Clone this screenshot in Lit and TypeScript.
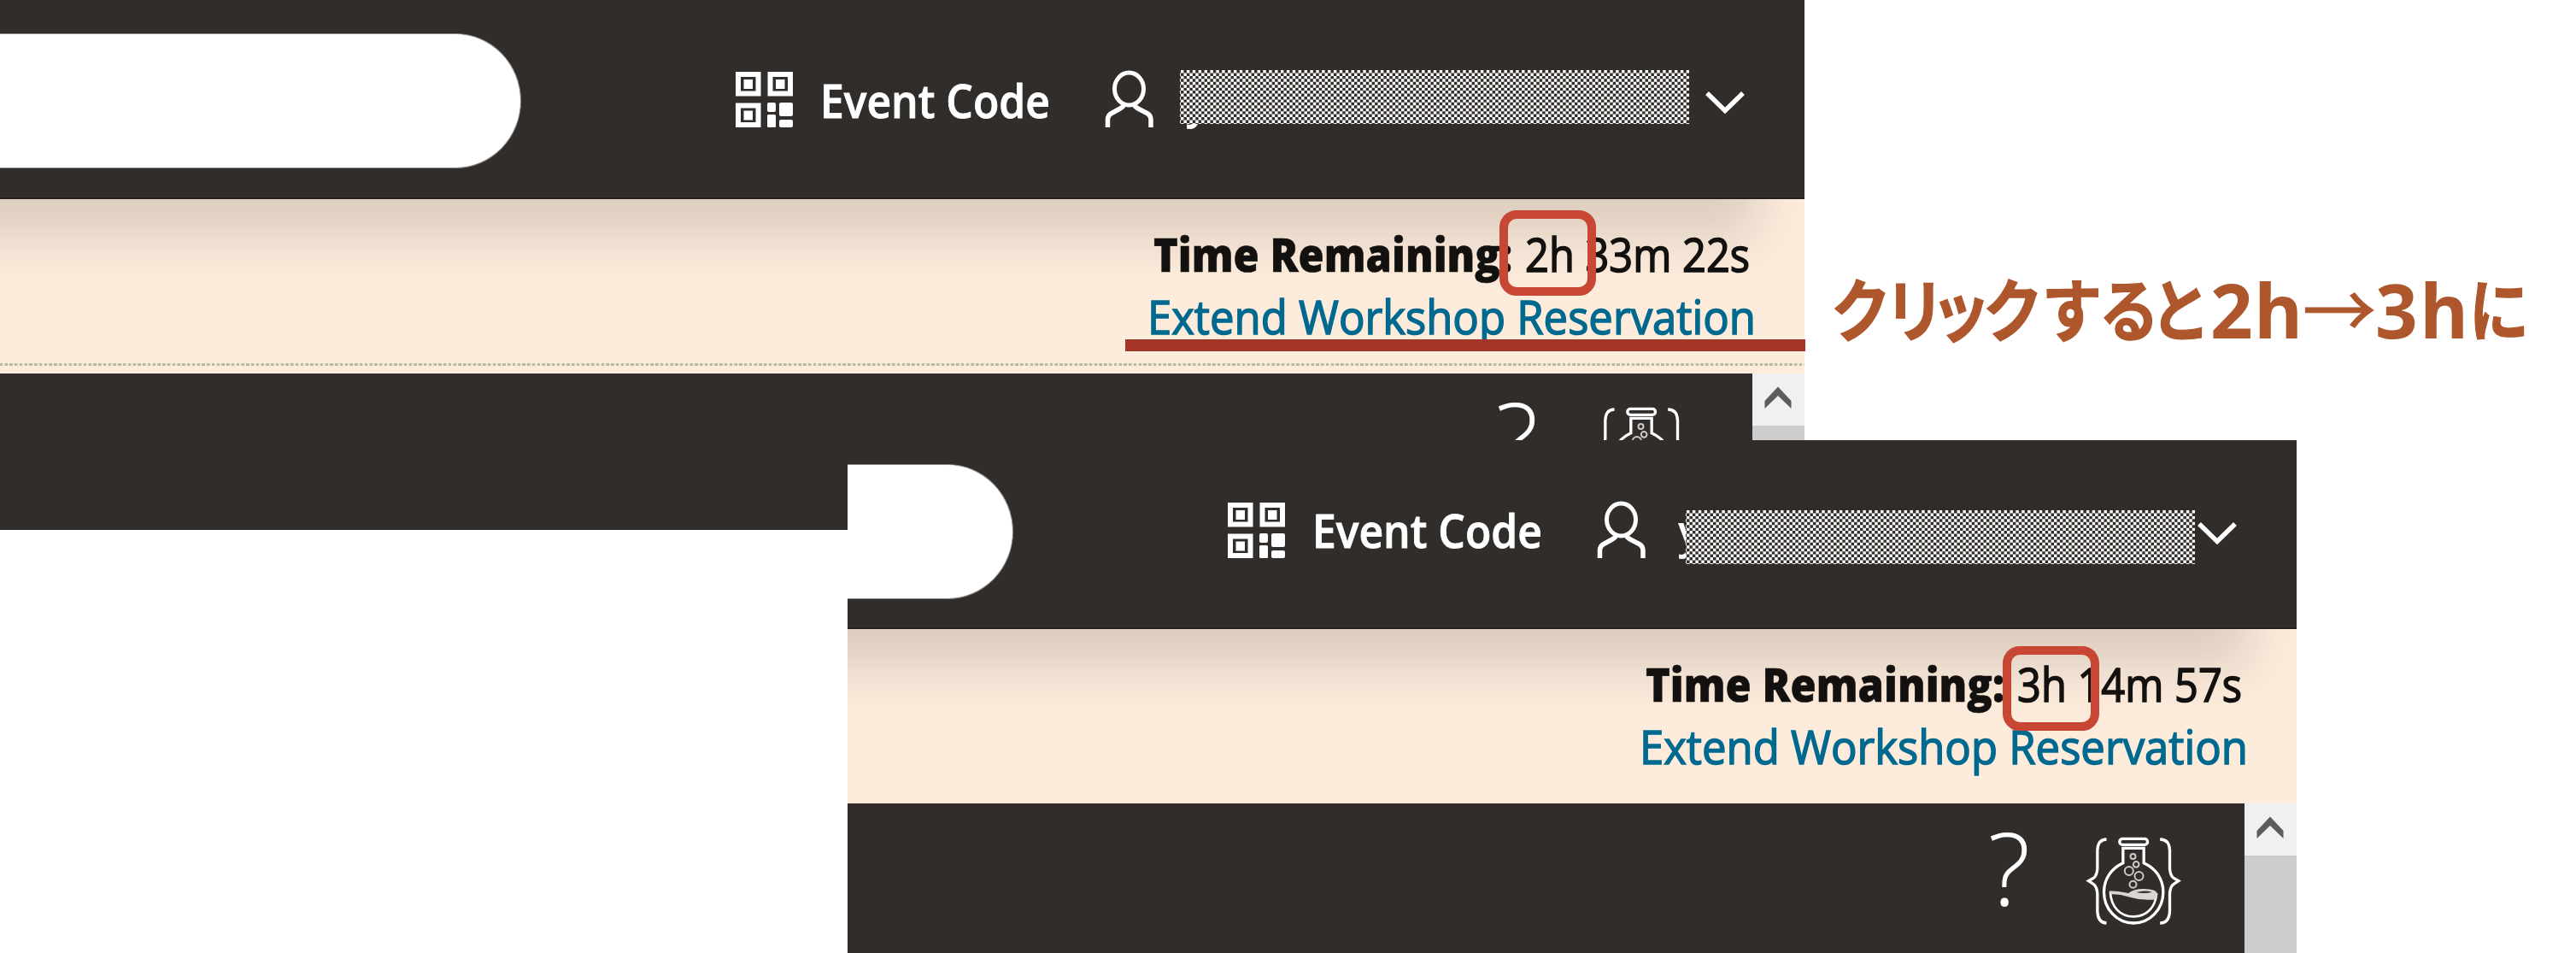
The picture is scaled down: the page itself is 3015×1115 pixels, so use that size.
import { LitElement, html, svg, css, nothing } from "lit";
import { customElement, property } from "lit/decorators.js";

/** One line of text stretched to a given measure, so headings keep their width. */
@customElement("fit-text")
class FitText extends LitElement {
  @property() text = "";
  @property({ type: Number }) width = 100;
  @property({ type: Number }) size = 54;
  @property({ type: Number }) weight = 400;
  @property({ type: Number }) grade = 0;

  static styles = css`
    :host { display: block; flex: none; }
    .line { display: block; overflow: visible; }
    .glyphs { fill: currentColor; stroke: currentColor; font-family: "Open Sans", "Noto Sans", sans-serif; }
  `;

  render() {
    return html`<svg class="line" width=${this.width} height=${this.size}>
      <text class="glyphs" x="0" y=${this.size * 0.75} font-size=${this.size} font-weight=${this.weight}
        stroke-width=${this.grade} textLength=${this.width} lengthAdjust="spacingAndGlyphs">${this.text}</text>
    </svg>`;
  }
}

/** Checkered redaction block. */
@customElement("mosaic-block")
class MosaicBlock extends LitElement {
  static styles = css`
    :host { display: block; width: 596px; height: 63px; }
    .grid { display: block; background: #312d2a; }
    .cells { fill: #fff; }
  `;

  render() {
    const c = 3.44;
    let d = "";
    for (let r = 0; r * c < 63; r++) {
      for (let k = 0; k * c < 600; k++) {
        if ((r + k) % 2 === 1) d += `M${(k * c - 2.4).toFixed(2)} ${(r * c).toFixed(2)}h${c}v${c}h-${c}z`;
      }
    }
    return html`<svg class="grid" width="596" height="63"><path class="cells" d=${d} /></svg>`;
  }
}

@customElement("workshop-window")
class WorkshopWindow extends LitElement {
  @property() time = "";
  @property({ type: Number }) timeWidth = 260;
  @property({ type: Boolean }) dotted = false;

  static styles = css`
    :host { display: block; width: 2112px; height: 640px; position: relative; background: #312d2a; color: #fff; }
    .header { display: flex; align-items: flex-start; height: 232.5px; box-sizing: border-box; border-bottom: 2px solid #24201e; }
    .pill { width: 610px; height: 158px; margin-top: 39px; box-sizing: border-box; background: #fff;
      border: 1.5px solid #8b8885; border-left: 0; border-radius: 0 77px 77px 0 / 0 79px 79px 0; }
    .qr { margin: 84px 0 0 251px; flex: none; }
    .event { margin: 96.5px 0 0 31.5px; }
    .user { margin: 82px 0 0 62.5px; flex: none; }
    .name { margin: 96.5px 0 0 33px; width: 608px; }
    .caret { margin: 105px 0 0 0; flex: none; }
    .banner { position: relative; overflow: hidden; height: 204px; box-sizing: border-box; padding-top: 44px;
      background: #fdecdc; color: #12110f; display: flex; flex-direction: column; }
    .banner::before { content: ""; position: absolute; top: -300px; left: -200px; right: 56px; height: 344px;
      background: rgba(0, 0, 0, 0.135); filter: blur(30px); }
    .timer { position: relative; display: flex; gap: 15px; padding-left: 1350px; height: 73px; }
    .link { position: relative; padding-left: 1343px; color: #00698f; }
    .dots { position: absolute; left: 0; right: 0; top: 192.5px; height: 3px;
      background: repeating-linear-gradient(90deg, #b3bc9c 0 2.9px, #f3e6d2 3.4px 5.3px, #b3bc9c 5.77px); }
    .toolbar { display: flex; height: 203px; }
    .tools { width: 2050.5px; display: flex; box-sizing: border-box; padding: 38px 74px 0 0; justify-content: flex-end; }
    .help { width: 114px; font: 300 118px/1 "Open Sans", sans-serif; margin-top: -22px; }
    .scroll { flex: 1; background: #cdcdcd; }
    .up { height: 61px; background: #f0f0f0; display: flex; justify-content: center; padding-top: 0; }
    .stroke { fill: none; stroke: #fff; }
    .solid { fill: #fff; }
  `;

  finder(x: number, y: number) {
    return svg`<rect class="stroke" x=${x + 3} y=${y + 3} width="23.5" height="22.5" stroke-width="6" />
      <rect class="solid" x=${x + 9.5} y=${y + 9} width="10.5" height="11" />`;
  }

  render() {
    return html`
      <div class="header">
        <div class="pill"></div>
        <svg class="qr" width="67" height="66">
          ${this.finder(0, 0)}${this.finder(37.5, 0)}${this.finder(0, 36.5)}
          <rect class="solid" x="37" y="36" width="10" height="11" rx="2" />
          <rect class="solid" x="51" y="36" width="16" height="16" rx="2" />
          <rect class="solid" x="37" y="50" width="10" height="15" rx="1.5" />
          <rect class="solid" x="51" y="56" width="16" height="9" rx="2" />
        </svg>
        <fit-text class="event" text="Event Code" .width=${269} .weight=${600} .grade=${0.9}></fit-text>
        <svg class="user" width="64" height="69">
          <ellipse class="stroke" cx="30.5" cy="22" rx="17" ry="19" stroke-width="5" />
          <path class="stroke" stroke-width="5.5" d="M5.5 67V58Q5.5 53 10 50.500L20 45Q24 43 25.500 39M35.500 39Q37 43 41 45L51.500 50.500Q56 53 56 58V67" />
        </svg>
        <fit-text class="name" text="y" .width=${27} .weight=${600}></fit-text>
        <svg class="caret" width="48" height="30"><path class="stroke" stroke-width="5.5" d="M2 4L23 24.500L44 4" /></svg>
      </div>
      <div class="banner">
        <div class="timer">
          <fit-text text="Time Remaining:" .width=${420} .weight=${800} .grade=${0.6}></fit-text>
          <fit-text text=${this.time} .width=${this.timeWidth} .weight=${500} .grade=${1.6}></fit-text>
        </div>
        <fit-text class="link" text="Extend Workshop Reservation" .width=${712} .weight=${500} .grade=${1.5}></fit-text>
        ${this.dotted ? html`<div class="dots"></div>` : nothing}
      </div>
      <div class="toolbar">
        <div class="tools">
          <div class="help">?</div>
          <svg width="112" height="105" viewBox="485 175 335 315">
            <g class="stroke" stroke-width="10">
              <path d="M558 187Q528 187 526 225V290Q524 315 512 323L495 333L512 344Q524 352 526 377V440Q528 480 558 481" />
              <path d="M746 187Q778 187 780 225V290Q782 315 794 323L811 333L794 344Q782 352 780 377V440Q778 480 746 481" />
              <rect x="604" y="185" width="98" height="21" rx="10" />
              <path d="M616 218H689V270C730 288 757 326 757 372A104 109 0 0 1 549 372C549 326 576 288 616 270Z" />
              <path stroke-width="8" d="M571 371C574 425 606 458 653 458C700 458 730 425 734 376" />
            </g>
            <path d="M568 368Q600 368 635 376Q655 360 690 361Q733 362 736 378Q736 397 722 399Q680 402 640 390Q600 378 572 380Z" fill="#d8d6d4" />
            <path d="M662 373Q690 364 718 372Q692 379 662 373Z" fill="#312d2a" />
            <g class="stroke" stroke-width="6" opacity=".75">
              <circle cx="651" cy="247" r="9" /><circle cx="662" cy="275" r="10" /><circle cx="637" cy="298" r="15" />
              <circle cx="672" cy="316" r="15" /><circle cx="651" cy="345" r="12" />
            </g>
          </svg>
        </div>
        <div class="scroll">
          <div class="up"><svg width="34" height="45"><path d="M1.500 32L17 15.500L32.500 32V41L17 26L1.500 41Z" fill="#5c5c5c" /></svg></div>
        </div>
      </div>`;
  }
}

const KANA: Array<[string, number]> = [
  ["ク", 38], ["リ", 101], ["ッ", 155], ["ク", 216], ["す", 285], ["る", 352], ["と", 412],
];
const KANA_SCALE = 0.88;

@customElement("app-root")
class AppRoot extends LitElement {
  static styles = css`
    :host { display: block; }
    .canvas { position: relative; width: 3015px; height: 1115px; overflow: hidden; background: #fff; }
    .shot { position: absolute; overflow: hidden; }
    .before { left: 0; top: 0; width: 2112px; height: 620px; }
    .after { left: 992px; top: 515px; width: 1696px; height: 600px; }
    .after-page { margin: -11.5px 0 0 -416px; }
    .mark { position: absolute; box-sizing: border-box; border: 10px solid #c84734; border-radius: 20px; }
    .mark-two { left: 1755px; top: 246px; width: 113px; height: 100px; }
    .mark-three { left: 2344px; top: 756px; width: 113px; height: 99px; }
    .bar { position: absolute; left: 1317px; top: 397px; width: 796px; height: 14px; background: #a43629; }
    .mosaic-one { position: absolute; left: 1381px; top: 82px; }
    .mosaic-two { position: absolute; left: 1973px; top: 597px; }
    .note { position: absolute; left: 2140px; top: 300px; overflow: visible; }
    .note-text { fill: #ae562c; font-weight: 700; font-family: "Open Sans", "Noto Sans CJK JP", sans-serif; }
    .kana { text-anchor: middle; font-family: "Noto Sans CJK JP", sans-serif; stroke: #ae562c; stroke-width: 1.2; }
    .arrow { text-anchor: middle; font-weight: 400; font-family: "Noto Sans CJK JP", sans-serif; stroke: #ae562c; stroke-width: 1; }
  `;

  render() {
    const xs = KANA.map(([, x]) => (x / KANA_SCALE).toFixed(1)).join(" ");
    return html`<div class="canvas">
      <div class="shot before"><workshop-window dotted time="2h 33m 22s" .timeWidth=${263}></workshop-window></div>
      <mosaic-block class="mosaic-one"></mosaic-block>
      <div class="mark mark-two"></div>
      <div class="bar"></div>
      <svg class="note" width="830" height="120">
        <text class="note-text kana" y="93.5" font-size="80" transform="scale(${KANA_SCALE} 1)" x=${xs}>${KANA.map(([k]) => k).join("")}</text>
        <text class="note-text" y="96" font-size="87" x="447 498">2h</text>
        <text class="note-text arrow" y="96" font-size="86" x="598">→</text>
        <text class="note-text" y="96" font-size="87" x="640 692">3h</text>
        <text class="note-text kana" y="93.5" font-size="80" transform="scale(${KANA_SCALE} 1)" x=${785 / KANA_SCALE}>に</text>
      </svg>
      <div class="shot after"><workshop-window class="after-page" time="3h 14m 57s" .timeWidth=${263}></workshop-window></div>
      <mosaic-block class="mosaic-two"></mosaic-block>
      <div class="mark mark-three"></div>
    </div>`;
  }
}
